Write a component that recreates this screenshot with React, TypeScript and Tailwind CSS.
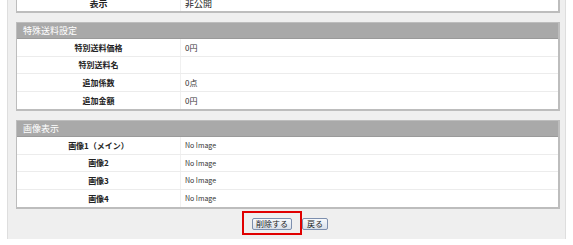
const font = { fontFamily: '"Noto Sans CJK JP", "Noto Sans", sans-serif' };

type Row = { label: string; value: string; small?: boolean };

const shipping: Row[] = [
  { label: "特別送料価格", value: "0円" },
  { label: "特別送料名", value: "" },
  { label: "追加係数", value: "0点" },
  { label: "追加金額", value: "0円" },
];

const images: Row[] = [
  { label: "画像1（メイン）", value: "No Image", small: true },
  { label: "画像2", value: "No Image", small: true },
  { label: "画像3", value: "No Image", small: true },
  { label: "画像4", value: "No Image", small: true },
];

function Rows({ rows }: { rows: Row[] }) {
  return (
    <div>
      {rows.map((r, i) => (
        <div
          key={r.label}
          className={
            "flex items-center bg-white text-[#222] " +
            (i % 2 === 0 ? "h-[18px] " : "h-[17px] ") +
            (i < rows.length - 1 ? "border-b border-[#ececec]" : "")
          }
        >
          <div className="w-[164px] h-full flex items-center justify-center border-r border-[#f0f0f0] text-[8px] font-bold leading-none">
            {r.label}
          </div>
          <div className={"pl-[4px] leading-none text-[#333] " + (r.small ? "text-[7px]" : "text-[8px]")}>
            {r.value}
          </div>
        </div>
      ))}
    </div>
  );
}

function Section({ title, rows }: { title: string; rows: Row[] }) {
  return (
    <div className="mt-[9px] border border-[#bdbdbd] border-b-2 border-r-2">
      <div className="h-[16px] bg-[#a9a9a9] border-b border-[#9a9a9a] flex items-center pl-[6px] text-white text-[9px] leading-none">
        {title}
      </div>
      <Rows rows={rows} />
    </div>
  );
}

export default function App() {
  return (
    <div className="w-[573px] h-[245px] bg-white overflow-hidden" style={font}>
      <div className="ml-[7px] w-[559px] h-full bg-[#efefef] border-l border-r border-[#dedede] pl-[8px] pr-[5px]">
        <div className="-mt-[6px] border border-[#bdbdbd] border-b-2 border-r-2 bg-white">
          <div className="h-[16px] flex items-center text-[#222]">
            <div className="w-[164px] h-full flex items-end justify-center border-r border-[#f0f0f0] text-[9px] font-bold leading-none pb-[3px]">
              表示
            </div>
            <div className="h-full flex items-end pl-[4px] text-[9px] leading-none pb-[3px]">非公開</div>
          </div>
        </div>

        <Section title="特殊送料設定" rows={shipping} />
        <Section title="画像表示" rows={images} />

        <div className="relative mt-[9px] flex justify-center gap-[10px] pl-[4px]">
          <button className="h-[12px] w-[40px] rounded-[2px] border border-[#7d8fae] bg-gradient-to-b from-[#f7f9fc] to-[#d9e0ea] text-[8px] leading-none text-[#222]">
            削除する
          </button>
          <button className="h-[12px] w-[26px] rounded-[2px] border border-[#7d8fae] bg-gradient-to-b from-[#f7f9fc] to-[#d9e0ea] text-[8px] leading-none text-[#222]">
            戻る
          </button>
          <div className="absolute left-[226px] -top-[7px] w-[60px] h-[24px] border-2 border-[#e00000]" />
        </div>
      </div>
    </div>
  );
}
